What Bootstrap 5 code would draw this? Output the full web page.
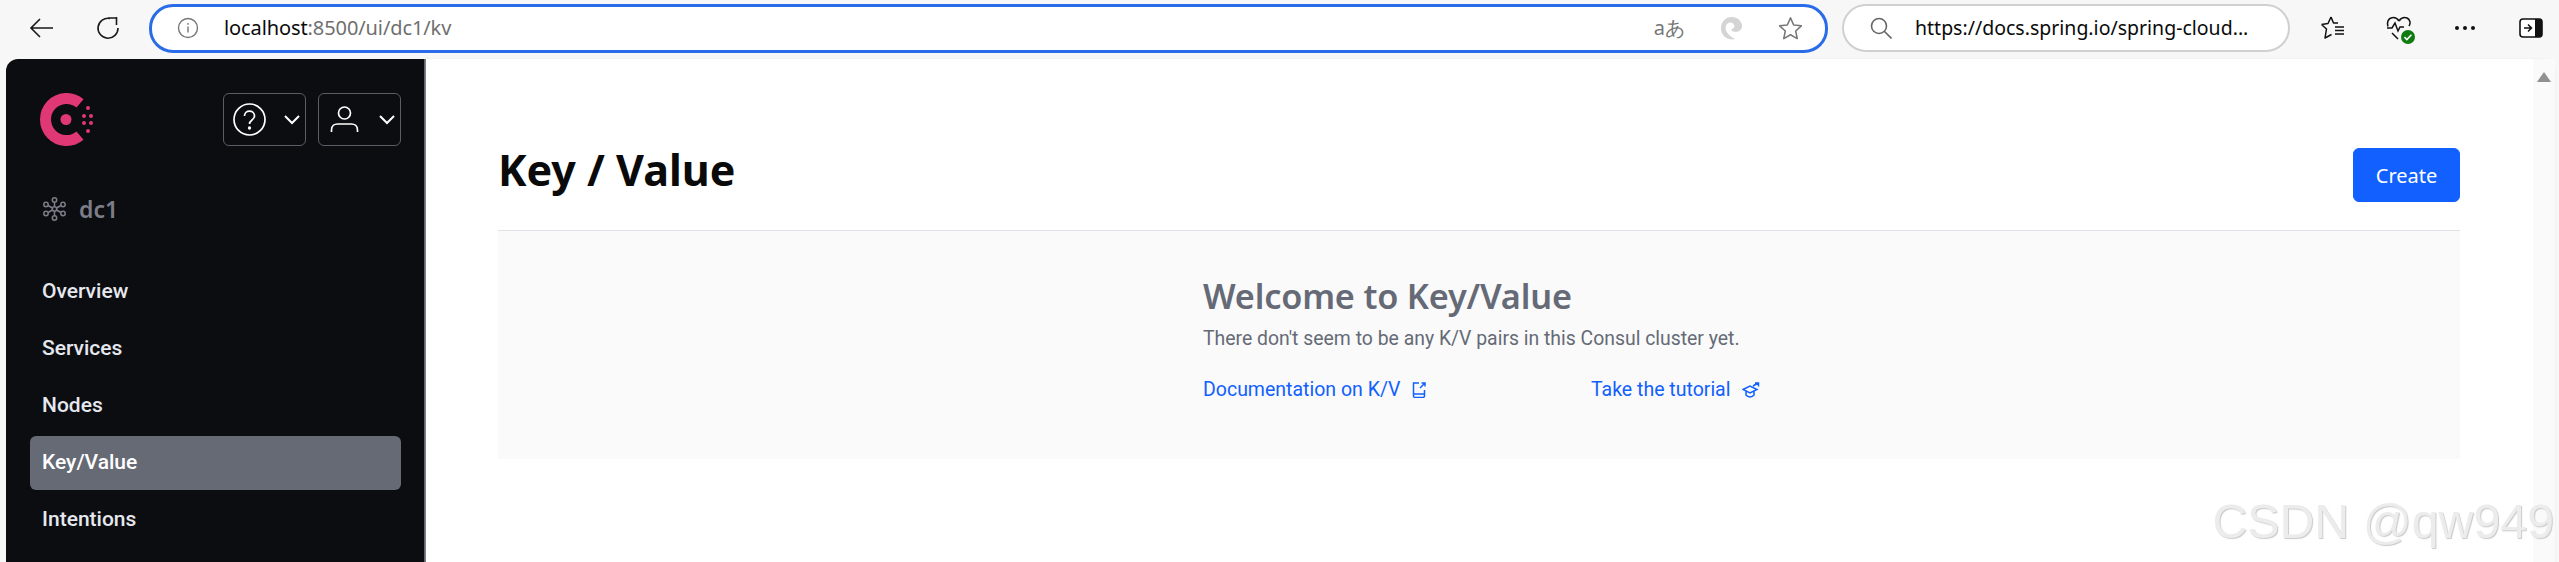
<!DOCTYPE html>
<html lang="en">
<head>
<meta charset="UTF-8">
<title>Key / Value - Consul</title>
<link href="https://cdn.jsdelivr.net/npm/bootstrap@5.3.2/dist/css/bootstrap.min.css" rel="stylesheet">
<style>
html, body { height: 562px; overflow: hidden; }
body { background: #f7f7f7; font-family: "Noto Sans", "Open Sans", sans-serif; color: #0a0a0a; position: relative; }

/* browser toolbar */
.tool-bar { height: 59px; padding: 0 0 3px 21px; }
.tool-btn { width: 40px; height: 40px; color: #1a1a1a; flex: none; }
.reload-btn { margin-left: 27px; }
.url-box { width: 1679px; height: 49px; margin-left: 21px; border: 3px solid #2a6ce8; border-radius: 24px; background: #fff; padding: 0 22px 0 25px; flex: none; }
.url-text { font-size: 20px; margin-left: 25px; letter-spacing: -.1px; }
.url-text span { color: #6f6f6f; }
.url-end { gap: 34px; color: #777; }
.lang-mark { font-size: 20px; }
.search-box { width: 448px; height: 48px; margin-left: 14px; border: 2px solid #d0d0d0; border-radius: 24px; background: #fff; padding: 0 20px 0 26px; flex: none; }
.search-text { font-size: 19.5px; margin-left: 23px; white-space: nowrap; }
.right-tools { margin-left: 23px; gap: 26px; }

/* consul page */
.page-area { height: 503px; padding: 0 4px 0 6px; }
.side-nav { width: 420px; background: #0c0d10; border-right: 2px solid #5c5f68; border-top-left-radius: 12px; padding: 34px 23px 0 24px; flex: none; }
.logo-row { height: 53px; padding-left: 10px; }
.menu-btn { width: 83px; height: 53px; border: 1px solid #5a5d66; border-radius: 6px; background: transparent; color: #fff; padding: 0 0 0 9px; }
.menu-group { gap: 12px; }
.drop-arrow { margin-left: 18px; }
.dc-row { color: #7b7e88; font-size: 23px; font-weight: 600; margin-top: 50px; padding-left: 13px; gap: 13px; height: 26px; }
.nav-list { margin-top: 43px; }
.nav-list .nav-link { height: 54px; margin-bottom: 3px; padding: 0 12px; color: #e6e8ef; font-family: Roboto, sans-serif; font-size: 21px; font-weight: 500; border-radius: 6px; display: flex; align-items: center; }
.nav-list .nav-link.active { background: #666a75; color: #fff; }
.main-pane { background: #fff; border-top-right-radius: 14px; box-shadow: 0 0 2px #e3e3e3; min-width: 0; }
.main-body { padding: 89px 73px 0 72px; }
.page-head { height: 83px; border-bottom: 1px solid #dfe1e6; }
.page-head h1 { font-size: 43px; font-weight: 700; margin: -2px 0 0 0; line-height: 48px; }
.create-btn { width: 107px; height: 54px; background: #1160ff; border-color: #1160ff; font-size: 20px; padding: 2px 0 0 0; }
.empty-panel { height: 228px; background: #fafafa; padding: 44px 0 0 705px; color: #656a76; }
.empty-panel h2 { font-size: 34.3px; font-weight: 600; line-height: 42px; margin: 0; letter-spacing: -.2px; }
.empty-panel p { font-family: Roboto, sans-serif; font-size: 19.4px; line-height: 26px; margin: 9px 0 0 0; }
.empty-links { margin-top: 25px; font-family: Roboto, sans-serif; font-size: 19.5px; line-height: 26px; }
.empty-links a { color: #1160ff; text-decoration: none; }
.doc-link { width: 388px; }
.fake-scroll { width: 22px; background: #fafafa; flex: none; }
.scroll-arrow { width: 0; height: 0; border-left: 7px solid transparent; border-right: 7px solid transparent; border-bottom: 10px solid #909090; margin-top: 13px; }
.csdn-mark { position: absolute; right: 5px; top: 493px; font-family: "Liberation Sans", Arial, sans-serif; font-size: 48.300px; line-height: 56px; color: #ececec; text-shadow: 1px 1px 1px #c9c9c9; white-space: nowrap; }
</style>
</head>
<body>

<div class="tool-bar d-flex align-items-center">
  <span class="tool-btn d-flex align-items-center justify-content-center">
    <svg width="24" height="24" viewBox="0 0 24 24" fill="none" stroke="currentColor" stroke-width="1.6"><path d="M24 12H2M11 3l-9 9 9 9"/></svg>
  </span>
  <span class="tool-btn reload-btn d-flex align-items-center justify-content-center">
    <svg width="26" height="26" viewBox="0 0 26 26" fill="none" stroke="currentColor" stroke-width="1.6"><path d="M15 3.400A10 10 0 1 0 23 13M13 3h9M21.500 2v8"/></svg>
  </span>
  <div class="url-box d-flex align-items-center">
    <svg width="22" height="22" viewBox="0 0 22 22" fill="none" stroke="#777" stroke-width="1.4"><circle cx="11" cy="11" r="9.500"/><path d="M11 9.500v6M11 6v1.800"/></svg>
    <span class="url-text">localhost<span>:8500/ui/dc1/kv</span></span>
    <div class="url-end d-flex align-items-center ms-auto">
      <span class="lang-mark">aあ</span>
      <svg width="25" height="25" viewBox="0 0 26 26"><path d="M2 13C2 6 7 1 13 1c6.500 0 11 4.500 11 9.500 0 4-3.500 6-6.500 6-2.500 0-4.500-1-4.500-2 0-1.500 3-1 3-4C16 7.500 13 6 10.500 7 6 8.500 6 14 9 18c2 2.500 5 5 8 6-7 2-15-3-15-11z" fill="#d4d4d4"/></svg>
      <svg width="25" height="25" viewBox="0 0 26 26" fill="none" stroke="#777" stroke-width="1.6" stroke-linejoin="round"><path d="M13 2l3.300 7.300 8 .9-5.900 5.400 1.600 7.900-7-4-7 4 1.600-7.900L1.700 10.200l8-.9z"/></svg>
    </div>
  </div>
  <div class="search-box d-flex align-items-center">
    <svg width="22" height="22" viewBox="0 0 22 22" fill="none" stroke="#666" stroke-width="1.6"><circle cx="9" cy="9" r="7.500"/><path d="M14.500 14.500l7 7"/></svg>
    <span class="search-text">https://docs.spring.io/spring-cloud...</span>
  </div>
  <div class="right-tools d-flex align-items-center">
    <span class="tool-btn d-flex align-items-center justify-content-center">
      <svg width="26" height="26" viewBox="0 0 26 26" fill="none" stroke="#111" stroke-width="1.5" stroke-linejoin="round"><path d="M11 2l2.500 6H18M1.500 9.500L8 8.500 11 2M1.500 9.500l5 4.500L5 23l6.500-3.500M15 12h9M15 15.500h9M15 19h9"/></svg>
    </span>
    <span class="tool-btn d-flex align-items-center justify-content-center position-relative">
      <svg width="26" height="26" viewBox="0 0 26 26" fill="none" stroke="#111" stroke-width="1.5"><path d="M13 6c2-3 5-4 8-3 3 1.500 4 5 2 8M13 6c-2-3-5-4-8-3-3 1.500-4 5-3 8.500M1 13h5l3-5 3 8 2-4h4M6 18l6 6"/></svg>
      <svg class="position-absolute" style="left:22px;top:22px" width="14" height="14" viewBox="0 0 14 14"><circle cx="7" cy="7" r="7" fill="#107c10"/><path d="M3.500 7.200l2.400 2.300 4.500-4.800" fill="none" stroke="#fff" stroke-width="1.600"/></svg>
    </span>
    <span class="tool-btn d-flex align-items-center justify-content-center">
      <svg width="22" height="6" viewBox="0 0 22 6" fill="#111"><circle cx="3" cy="3" r="2"/><circle cx="11" cy="3" r="2"/><circle cx="19" cy="3" r="2"/></svg>
    </span>
    <span class="tool-btn d-flex align-items-center justify-content-center">
      <svg width="24" height="20" viewBox="0 0 24 20"><rect x="1" y="1" width="22" height="18" rx="3" fill="#fff" stroke="#111" stroke-width="1.600"/><path d="M16 1h4a3 3 0 0 1 3 3v12a3 3 0 0 1-3 3h-4z" fill="#111"/><path d="M5 10h7M9 6.500l3.500 3.500L9 13.500" fill="none" stroke="#111" stroke-width="1.500"/></svg>
    </span>
  </div>
</div>

<div class="page-area d-flex">
  <aside class="side-nav">
    <div class="logo-row d-flex align-items-center justify-content-between">
      <svg width="54" height="54" viewBox="0 0 54 54" fill="#e03875">
        <path d="M40 10.400A21 21 0 1 0 40 42.600" fill="none" stroke="#e03875" stroke-width="11"/>
        <circle cx="26" cy="26.500" r="5.500"/><circle cx="48" cy="15" r="2"/><circle cx="44" cy="23" r="2"/><circle cx="51" cy="23" r="2"/><circle cx="44" cy="30" r="2"/><circle cx="51" cy="30" r="2"/><circle cx="48" cy="38" r="2"/>
      </svg>
      <div class="d-flex menu-group">
        <button class="menu-btn d-flex align-items-center" type="button">
          <svg width="33" height="33" viewBox="0 0 33 33" fill="none" stroke="#fff" stroke-width="1.700"><circle cx="16.500" cy="16.500" r="15.500"/><path d="M11.500 13c0-6.500 10-6.500 10 0 0 4-5 4-5 8"/><circle cx="16.500" cy="25" r=".8"/></svg>
          <svg class="drop-arrow" width="16" height="10" viewBox="0 0 16 10" fill="none" stroke="#fff" stroke-width="2"><path d="M1 1l7 7 7-7"/></svg>
        </button>
        <button class="menu-btn d-flex align-items-center" type="button">
          <svg width="33" height="33" viewBox="0 0 33 33" fill="none" stroke="#fff" stroke-width="1.700"><circle cx="16.500" cy="10" r="6"/><path d="M3.500 29v-2c0-4 3-6 6-6h14c3 0 6 2 6 6v2"/></svg>
          <svg class="drop-arrow" width="16" height="10" viewBox="0 0 16 10" fill="none" stroke="#fff" stroke-width="2"><path d="M1 1l7 7 7-7"/></svg>
        </button>
      </div>
    </div>
    <div class="dc-row d-flex align-items-center">
      <svg width="23" height="24" viewBox="0 0 23 24" fill="none" stroke="#7b7e88" stroke-width="1.500"><circle cx="11.500" cy="3" r="2.200"/><circle cx="11.500" cy="21" r="2.200"/><circle cx="3" cy="7.500" r="2.200"/><circle cx="20" cy="7.500" r="2.200"/><circle cx="3" cy="16.500" r="2.200"/><circle cx="20" cy="16.500" r="2.200"/><circle cx="11.500" cy="12" r="2.200"/><path d="M5 8.500l4.500 2.500M18 8.500l-4.500 2.500M5 15.500l4.500-2.500M18 15.500l-4.500-2.500M11.500 5v5M11.500 14v5"/></svg>
      <span>dc1</span>
    </div>
    <nav class="nav flex-column nav-list">
      <a class="nav-link" href="#">Overview</a>
      <a class="nav-link" href="#">Services</a>
      <a class="nav-link" href="#">Nodes</a>
      <a class="nav-link active" href="#">Key/Value</a>
      <a class="nav-link" href="#">Intentions</a>
    </nav>
  </aside>

  <main class="main-pane flex-grow-1 d-flex">
    <div class="main-body flex-grow-1">
      <div class="page-head d-flex justify-content-between align-items-start">
        <h1>Key / Value</h1>
        <button class="btn btn-primary create-btn" type="button">Create</button>
      </div>
      <div class="empty-panel">
        <h2>Welcome to Key/Value</h2>
        <p>There don't seem to be any K/V pairs in this Consul cluster yet.</p>
        <div class="empty-links d-flex">
          <div class="doc-link"><a href="#" class="d-inline-flex align-items-center gap-2">Documentation on K/V
            <svg class="ms-1" width="14" height="16" viewBox="0 0 14 16" fill="none" stroke="#1160ff" stroke-width="1.500"><path d="M7 1H1.500v13a1.500 1.500 0 0 0 1.500 1.500h8a1.500 1.500 0 0 0 1.500-1.500V8M1.500 12h11M8 6l5-5M9.500 1H13v3.500"/></svg></a></div>
          <div><a href="#" class="d-inline-flex align-items-center gap-2">Take the tutorial
            <svg class="ms-1" width="18" height="16" viewBox="0 0 18 16" fill="none" stroke="#1160ff" stroke-width="1.500"><path d="M1 7.500l7-3.500 7 3.500-7 3.500zM4 9.500V13c2 2.500 6 2.500 8 0V9.500M11 4l5-3M13 1h3.500v3.500"/></svg></a></div>
        </div>
      </div>
    </div>
    <div class="fake-scroll d-flex justify-content-center align-items-start">
      <div class="scroll-arrow"></div>
    </div>
  </main>
</div>

<div class="csdn-mark">CSDN @qw949</div>

<script src="https://cdn.jsdelivr.net/npm/bootstrap@5.3.2/dist/js/bootstrap.bundle.min.js"></script>
</body>
</html>
